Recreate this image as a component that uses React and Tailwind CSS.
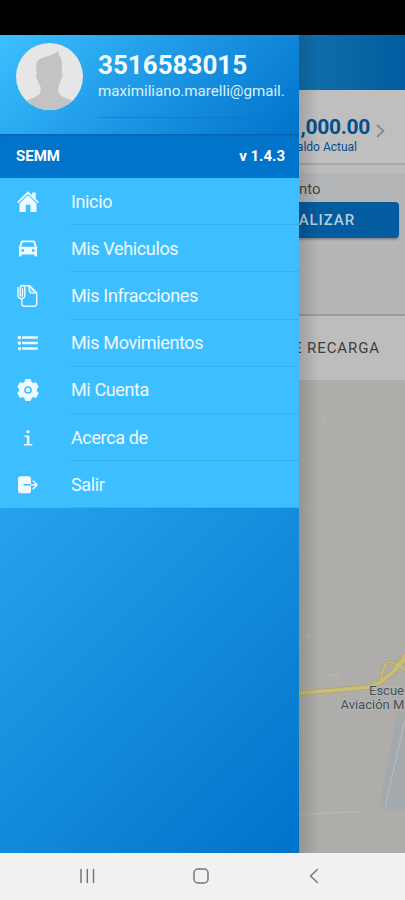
import React from 'react';

const HomeIcon = () => (
  <svg className="w-6 h-6" viewBox="0 0 24 24" fill="currentColor">
    <path d="M12 1.2 1 12l1.3 1.3L12 3.900l9.700 9.400L23 12l-3.300-3.300V2.600h-3.400v2.700z" />
    <path d="M12 5.300 3.500 13.500V22h6.300v-7.300h4.600v7.300h6.100v-8.500z" />
  </svg>
)

const CarIcon = () => (
  <svg className="w-6 h-6" viewBox="0 0 24 24" fill="currentColor" fillRule="evenodd">
    <path transform="translate(1.200 .8) scale(.9)" d="M5.800 3h12.400c.8 0 1.400.5 1.700 1.200L22 10.500v9.300c0 .5-.4.900-.9.900h-1.300c-.5 0-.9-.4-.9-.9v-1.300H5.100v1.300c0 .5-.4.900-.9.900H2.900c-.5 0-.9-.4-.9-.9v-9.300l2.100-6.300C4.400 3.500 5 3 5.800 3zM6 5 4.400 10h15.200L18 5zM6.200 12.500a1.600 1.600 0 1 0 0 3.200 1.600 1.600 0 0 0 0-3.200zM17.800 12.500a1.600 1.600 0 1 0 0 3.200 1.600 1.600 0 0 0 0-3.200z" />
  </svg>
)

const TicketIcon = () => (
  <svg className="w-6 h-6" viewBox="0 0 24 24" fill="none" stroke="currentColor" strokeWidth="1.400" strokeLinecap="round" strokeLinejoin="round">
    <path d="M8.500 1.800h5.200l7 7v11.200a2.300 2.300 0 0 1-2.300 2.300H8.200a2.300 2.300 0 0 1-2.300-2.300v-5" />
    <path d="M13.200 1.900v3.500c0 2.500 1 3.600 3.400 3.600h4z" fill="currentColor" fillOpacity=".25" />
    <path d="M2 3.700v7.600a3.400 3.400 0 0 0 6.800 0V3.800a2.300 2.300 0 0 0-4.600 0v7.200a1.150 1.150 0 0 0 2.300 0V4.700" />
  </svg>
)

const ListIcon = () => (
  <svg className="w-6 h-6" viewBox="0 0 24 24" fill="currentColor">
    <rect x="1.800" y="5" width="3.200" height="3.200" rx=".8" />
    <rect x="1.800" y="10.500" width="3.200" height="3.200" rx=".8" />
    <rect x="1.800" y="16" width="3.200" height="3.200" rx=".8" />
    <rect x="6" y="5.300" width="16" height="2.400" rx=".8" />
    <rect x="6" y="10.800" width="16" height="2.400" rx=".8" />
    <rect x="6" y="16.300" width="16" height="2.400" rx=".8" />
  </svg>
)

const GearIcon = () => (
  <svg className="w-6 h-6" viewBox="0 0 24 24">
    <g fill="currentColor">
      <circle cx="12" cy="12" r="9" />
      <rect x="8.700" y="1.100" width="6.600" height="21.800" rx="1.600" />
      <rect x="8.700" y="1.100" width="6.600" height="21.800" rx="1.600" transform="rotate(60 12 12)" />
      <rect x="8.700" y="1.100" width="6.600" height="21.800" rx="1.600" transform="rotate(120 12 12)" />
    </g>
    <circle cx="12" cy="12" r="3.100" fill="none" stroke="#3dbfff" strokeWidth="1.500" />
  </svg>
)

const InfoIcon = () => (
  <svg className="w-6 h-6" viewBox="0 0 24 24" fill="currentColor">
    <circle cx="12" cy="5.600" r="1.700" />
    <path d="M8.400 9.400h5v8.700h2.900v1.500H8v-1.500h2.900v-7.200H8.400z" />
  </svg>
)

const ExitIcon = () => (
  <svg className="w-6 h-6" viewBox="0 0 24 24">
    <rect x="2" y="3.300" width="13" height="17" rx="2.500" fill="currentColor" />
    <path d="M7.500 11.800H15" stroke="#3dbfff" strokeWidth="1.500" />
    <path d="M15.500 11.800h5.500M17.300 8 21.100 11.800l-3.800 3.800" fill="none" stroke="currentColor" strokeWidth="1.600" strokeLinecap="round" strokeLinejoin="round" />
  </svg>
)

const menu = [
  { title: 'Inicio', icon: HomeIcon },
  { title: 'Mis Vehiculos', icon: CarIcon },
  { title: 'Mis Infracciones', icon: TicketIcon },
  { title: 'Mis Movimientos', icon: ListIcon },
  { title: 'Mi Cuenta', icon: GearIcon },
  { title: 'Acerca de', icon: InfoIcon },
  { title: 'Salir', icon: ExitIcon },
]

const Avatar = () => (
  <svg className="w-[67px] h-[67px] shrink-0 rounded-full" viewBox="0 0 68 68">
    <rect width="68" height="68" fill="#e6e6e6" />
    <path d="M21 31c-.8-6-1-11 1.500-13.500C27 13.500 37 13.500 42.500 8l1 4.500c3.500 3.500 3.500 10 3 17.500 1.200.5.600 6.500-1.300 8-.8 3.500-1.700 5.500-2.200 7.500v4c1 4 6 6 13.500 8.500V68H11v-9.500C18 55 24 54 25 49v-4c-1.500-2.500-2.300-4.500-2.900-7.500-1.800-1.500-2.100-5.500-1.100-6.500z" fill="#c3c3c3" />
  </svg>
)

const Drawer = () => (
  <aside className="w-[299px] shrink-0 flex flex-col">
    <div className="h-[99px] shrink-0 flex pl-4 pt-[8px] bg-[linear-gradient(135deg,#3cbfff_0%,#1c96e4_52%,#0073ca_100%)]">
      <Avatar />
      <div className="ml-[15px] h-[75px] flex-1 min-w-0 border-b border-[#0b75c2]/60">
        <h2 className="mt-[7px] text-[26px] leading-[30px] font-bold text-[#f4fbff]">3516583015</h2>
        <p className="mt-[1px] text-[15.150px] leading-[20px] whitespace-nowrap text-[#d9f1ff]">maximiliano.marelli@gmail.</p>
      </div>
    </div>
    <div className="flex-1 min-h-0 flex flex-col bg-[linear-gradient(135deg,#3cbfff,#0073ca)]">
      <div className="h-[44px] shrink-0 flex items-center justify-between pl-4 pr-[14px] bg-[#0074cb] text-white text-[15px] font-bold shadow-[inset_0_2px_2px_-1px_#0560a8]">
        <span>SEMM</span>
        <span>v 1.4.3</span>
      </div>
      <ul className="shrink-0 bg-[#3dbfff]">
        {menu.map((item) => {
          const Icon = item.icon
          return (
            <li key={item.title} className="h-[47.200px] flex items-center text-[#effaff]">
              <div className="w-[71px] shrink-0 pl-[15.500px]">
                <Icon />
              </div>
              <div className="h-full flex-1 flex items-center border-b border-[#32b1f1] text-[18px] tracking-[-0.370px]">{item.title}</div>
            </li>
          )
        })}
      </ul>
    </div>
  </aside>
)

const MapView = () => (
  <svg className="w-full flex-1" viewBox="0 0 106 473" fill="none" fontFamily="Roboto, sans-serif">
    <rect width="106" height="473" fill="#aeada9" />
    <path d="M98 332h8v97H80z" fill="#a4a9ae" />
    <path d="M106 340 86 427" stroke="#b7bbc0" strokeWidth="1.100" />
    <g strokeLinecap="round">
      <path d="M-3 313.500 66 307.500c10-1 17-5 24-12l18-18" stroke="#b3a468" strokeWidth="5" />
      <path d="M82 300c2-7 2-14 6-17 4-2 9 0 10 4 1 4-3 6-8 8" stroke="#b3a468" strokeWidth="3.200" />
      <path d="M98 285 108 272M98 284l9 7" stroke="#b3a468" strokeWidth="3.200" />
      <path d="M-3 313.500 66 307.500c10-1 17-5 24-12l18-18" stroke="#c9bd77" strokeWidth="3.600" />
      <path d="M82 300c2-7 2-14 6-17 4-2 9 0 10 4 1 4-3 6-8 8" stroke="#c9bd77" strokeWidth="1.800" />
      <path d="M98 285 108 272M98 284l9 7" stroke="#c9bd77" strokeWidth="1.800" />
    </g>
    <path d="m2 257 6-3 2 5M25 305l2-3M32 296l6-2 2 5M0 435c15 0 25-3 60-3M23 37l4 6M1 466l3 3" stroke="#bcbbb7" strokeWidth="1" />
    <g fontSize="13" fill="#44515a" stroke="#b6b6b3" strokeWidth="2" paintOrder="stroke">
      <text x="70" y="315">Escue</text>
      <text x="41.500" y="328.500">Aviación M</text>
    </g>
  </svg>
)

// dimmed page behind the open drawer
const Page = () => (
  <section className="relative flex-1 min-w-0 overflow-hidden flex flex-col bg-[#b5b6b8]">
    <div className="h-[55px] shrink-0 bg-linear-to-r from-[#1270ae] to-[#025c9f]" />
    <div className="h-[73px] shrink-0 bg-[#bfbfbf] flex justify-end items-start pr-5 pt-[23px]">
      <div className="flex flex-col items-end shrink-0 text-[#034f8d]">
        <strong className="mr-[1px] text-[21px] leading-[28px] font-bold tracking-[-0.300px]">,000.00</strong>
        <span className="mr-[14px] text-[12px] leading-[12px]">aldo Actual</span>
      </div>
      <svg className="mt-[11px] ml-[5px] w-[9px] h-[14px] shrink-0" viewBox="0 0 9 14" fill="none" stroke="#8a8a8a" strokeWidth="1.800">
        <path d="m1 1 6.500 6L1 13" />
      </svg>
    </div>
    <div className="h-[10px] shrink-0 border-t-2 border-[#a8a8a8] bg-[#bcbdbe]" />
    <div className="h-[143px] shrink-0 pr-[6px] border-b-2 border-[#9b9b9b]">
      <p className="pt-[4px] text-[15px] leading-[24px] text-[#474747]">nto</p>
      <div className="mt-[1px] h-[36px] pr-[44px] flex items-center justify-end rounded-r bg-[#025c9f] text-[#b9cede] text-[15px] font-medium tracking-[0.900px] shadow-[0_2px_2px_#8b8d8f]">ALIZAR</div>
    </div>
    <div className="h-[64px] shrink-0 flex items-center justify-end pr-[25px] bg-[#bdbdbd] text-[#3e3e3e] text-[15px] tracking-[0.900px] whitespace-nowrap">E RECARGA</div>
    <MapView />
    <div className="absolute inset-y-0 left-0 w-5 bg-linear-to-r from-black/15 to-transparent" />
  </section>
)

const NavBar = () => (
  <nav className="h-[47px] shrink-0 flex items-center pl-[79px] bg-[#f1f1f1] text-[#777]">
    <svg className="w-4 h-4 -mt-[2px]" viewBox="0 0 16 16" stroke="currentColor" strokeWidth="1.500" strokeLinecap="round">
      <path d="M2 1.500v13M8.300 1.500v13M14.500 1.500v13" />
    </svg>
    <svg className="w-4 h-4 -mt-[2px] ml-[98px]" viewBox="0 0 16 16" fill="none" stroke="currentColor" strokeWidth="1.500">
      <rect x="1" y="1" width="14" height="14" rx="4" />
    </svg>
    <svg className="w-[10px] h-4 -mt-[2px] ml-[100px]" viewBox="0 0 10 16" fill="none" stroke="currentColor" strokeWidth="1.500" strokeLinecap="round" strokeLinejoin="round">
      <path d="M8.500 1.500 1.500 8l7 6.500" />
    </svg>
  </nav>
)

const App = () => {
  return (
    <div className="w-[405px] h-[900px] flex flex-col overflow-hidden font-[Roboto,sans-serif]">
      <div className="h-[35px] shrink-0 bg-black" />
      <main className="flex-1 min-h-0 flex">
        <Drawer />
        <Page />
      </main>
      <NavBar />
    </div>
  )
}

export default App
